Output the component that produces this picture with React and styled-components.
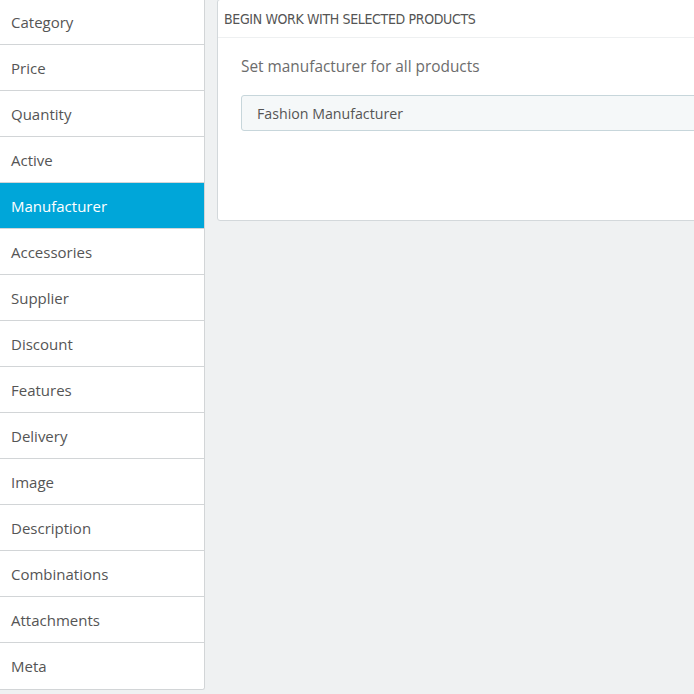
import React from "react";
import styled, { createGlobalStyle } from "styled-components";

const tabs = [
  "Category",
  "Price",
  "Quantity",
  "Active",
  "Manufacturer",
  "Accessories",
  "Supplier",
  "Discount",
  "Features",
  "Delivery",
  "Image",
  "Description",
  "Combinations",
  "Attachments",
  "Meta",
];

export default function App() {
  return (
    <>
      <Global />
      <Page>
        <Sidebar>
          {tabs.map((t) => (
            <Tab key={t} active={t === "Manufacturer"}>
              {t}
            </Tab>
          ))}
        </Sidebar>
        <Panel>
          <Heading>BEGIN WORK WITH SELECTED PRODUCTS</Heading>
          <Body>
            <Label>Set manufacturer for all products</Label>
            <Select>Fashion Manufacturer</Select>
          </Body>
        </Panel>
      </Page>
    </>
  );
}

const Global = createGlobalStyle`
  html, body {
    margin: 0;
    background: #eff1f2;
    overflow: hidden;
  }
  body {
    font-family: "Open Sans", "Noto Sans", sans-serif;
    color: #555;
  }
`;

const Page = styled.div`
  display: flex;
  align-items: flex-start;
  width: 694px;
  height: 694px;
  overflow: hidden;
`;

const Sidebar = styled.div`
  flex: none;
  width: 204px;
  margin-top: -1px;
  background: #fff;
  border-right: 1px solid #d2d5d7;
  border-bottom: 1px solid #d2d5d7;
  border-bottom-right-radius: 3px;
  overflow: hidden;
`;

const Tab = styled.div`
  height: 45px;
  display: flex;
  align-items: center;
  padding-left: 11px;
  font-size: 15px;
  color: ${(p) => (p.active ? "#fff" : "#555")};
  background: ${(p) => (p.active ? "#00a6d9" : "#fff")};
  border-bottom: 1px solid #d2d5d7;

  &:last-child {
    height: 46px;
    border-bottom: none;
  }
`;

const Panel = styled.div`
  flex: none;
  width: 520px;
  height: 222px;
  margin-top: -1px;
  margin-left: 12px;
  background: #fff;
  border: 1px solid #d3d8db;
  border-radius: 3px;
  box-sizing: border-box;
`;

const Heading = styled.div`
  height: 37px;
  display: flex;
  align-items: center;
  padding-left: 6px;
  font-family: "DejaVu Sans Condensed", "DejaVu Sans", sans-serif;
  font-stretch: condensed;
  font-size: 14px;
  letter-spacing: -0.35px;
  color: #555;
  border-bottom: 1px solid #eef0f1;
`;

const Body = styled.div`
  padding: 19px 0 0 23px;
`;

const Label = styled.div`
  font-size: 15.4px;
  line-height: 20px;
  color: #6c6c6c;
`;

const Select = styled.div`
  margin-top: 18px;
  height: 36px;
  display: flex;
  align-items: center;
  padding-left: 15px;
  font-size: 14.2px;
  background: #f5f8f9;
  border: 1px solid #c7d6db;
  border-radius: 3px;
  box-sizing: border-box;
`;
